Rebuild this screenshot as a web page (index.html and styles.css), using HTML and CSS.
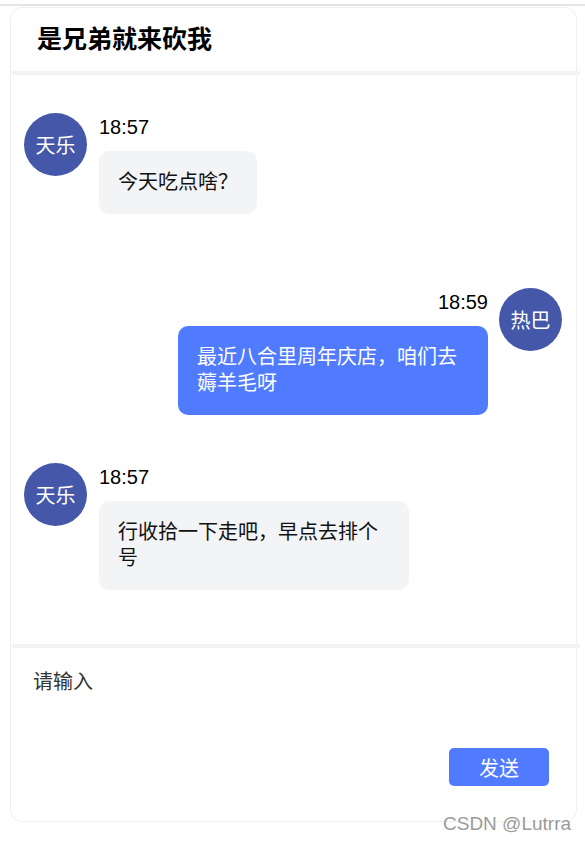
FILE: index.html
```html
<!DOCTYPE html>
<html lang="zh-CN">

<head>
    <meta charset="UTF-8">
    <title>是兄弟就来砍我</title>
    <link rel="stylesheet" href="styles.css">
</head>

<body>
    <div class="topline"></div>
    <div class="chat-card">
        <div class="chat-header">是兄弟就来砍我</div>
        <div class="divider"></div>
        <div class="chat-list">
            <div class="msg">
                <div class="avatar">天乐</div>
                <div class="msg-body">
                    <div class="msg-time">18:57</div>
                    <div class="bubble">今天吃点啥？</div>
                </div>
            </div>
            <div class="msg mine">
                <div class="avatar">热巴</div>
                <div class="msg-body">
                    <div class="msg-time">18:59</div>
                    <div class="bubble">最近八合里周年庆店，咱们去薅羊毛呀</div>
                </div>
            </div>
            <div class="msg">
                <div class="avatar">天乐</div>
                <div class="msg-body">
                    <div class="msg-time">18:57</div>
                    <div class="bubble">行收拾一下走吧，早点去排个号</div>
                </div>
            </div>
        </div>
        <div class="divider"></div>
        <form class="chat-input">
            <textarea placeholder="请输入"></textarea>
            <button type="button" class="send-btn">发送</button>
        </form>
    </div>
    <div class="watermark">CSDN @Lutrra</div>
</body>

</html>
```

FILE: styles.css
```css
body {
    font-family: "Liberation Sans", "Noto Sans CJK SC", sans-serif;
    margin: 0;
    padding-top: 4px;
    background-color: #fff;
    color: #000;
    min-height: 838px;
}

.topline {
    height: 2px;
    background-color: #e4e4e9;
}

.chat-card {
    width: 565px;
    height: 813px;
    margin: 1px 0 0 10px;
    border: 1px solid #eeeff1;
    border-radius: 12px;
    display: flex;
    flex-direction: column;
}

.chat-header {
    height: 63px;
    line-height: 63px;
    padding-left: 26px;
    font-size: 25px;
    font-weight: bold;
}

.divider {
    height: 4px;
    margin: 0 -4px 0 1px;
    background-color: #f2f3f5;
}

.chat-list {
    height: 569px;
    box-sizing: border-box;
    padding: 38px 14px 0 13px;
    overflow: hidden;
}

.msg {
    display: flex;
    align-items: flex-start;
    gap: 12px;
    min-height: 150px;
    margin-bottom: 25px;
}

.msg.mine {
    flex-direction: row-reverse;
    gap: 11px;
}

.avatar {
    flex: none;
    width: 63px;
    height: 63px;
    border-radius: 50%;
    background-color: #4457a8;
    color: #fff;
    font-size: 20px;
    display: flex;
    align-items: center;
    justify-content: center;
}

.msg-body {
    display: flex;
    flex-direction: column;
    align-items: flex-start;
}

.mine .msg-body {
    align-items: flex-end;
}

.msg-time {
    font-size: 20px;
    line-height: 28px;
    margin-bottom: 10px;
}

.bubble {
    max-width: 310px;
    box-sizing: border-box;
    padding: 18px 19px 19px;
    font-size: 20px;
    line-height: 26px;
    border-radius: 10px;
    background-color: #f3f4f6;
    color: #111;
}

.mine .bubble {
    background-color: #507bff;
    color: #fff;
}

.chat-input {
    flex-grow: 1;
    display: flex;
    flex-direction: column;
    padding: 20px 27px 0 22px;
}

.chat-input textarea {
    height: 70px;
    padding: 0;
    border: none;
    outline: none;
    resize: none;
    font-family: "Noto Sans CJK SC", sans-serif;
    font-size: 20px;
    line-height: 26px;
    color: #333;
}

.chat-input textarea::placeholder {
    color: #333;
}

.send-btn {
    align-self: flex-end;
    margin-top: 10px;
    width: 100px;
    height: 38px;
    border: none;
    border-radius: 5px;
    background-color: #507bff;
    color: #fff;
    font-family: "Noto Sans CJK SC", sans-serif;
    font-size: 20px;
    cursor: pointer;
}

.watermark {
    position: absolute;
    left: 443px;
    top: 813px;
    line-height: 22px;
    font-size: 19px;
    color: #9a9a9a;
    text-shadow: 0 0 2px #fff, 0 0 2px #fff;
}
```
